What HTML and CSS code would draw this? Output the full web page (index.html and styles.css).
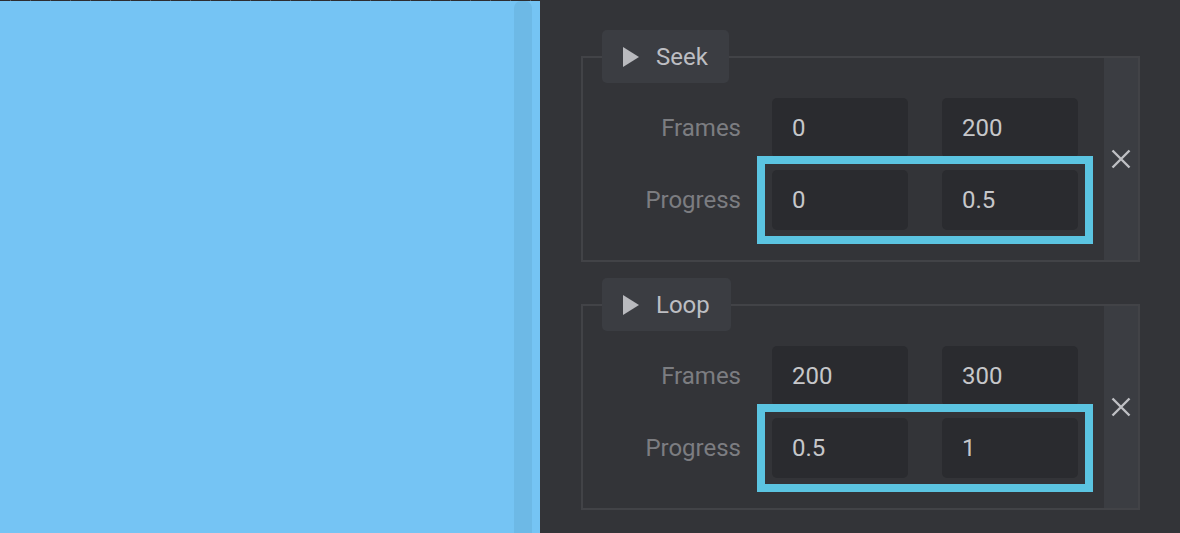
FILE: index.html
```html
<!DOCTYPE html>
<html lang="en">
<head>
<meta charset="utf-8">
<title>Animation segments</title>
<link rel="stylesheet" href="styles.css">
</head>
<body>
<div class="app">
  <div class="preview">
    <div class="ruler"></div>
    <div class="preview-area">
      <div class="track"></div>
    </div>
  </div>
  <div class="panel">
    <section class="group">
      <button class="legend">
        <svg class="play" width="16" height="20" viewBox="0 0 16 20"><polygon points="0,0 16,10 0,20" fill="currentColor"/></svg>
        <span>Seek</span>
      </button>
      <div class="box">
        <div class="fields">
          <div class="row">
            <span class="label">Frames</span>
            <div class="pair">
              <div class="input">0</div>
              <div class="input">200</div>
            </div>
          </div>
          <div class="row">
            <span class="label">Progress</span>
            <div class="pair">
              <div class="input">0</div>
              <div class="input">0.5</div>
              <div class="highlight"></div>
            </div>
          </div>
        </div>
        <div class="remove">
          <svg width="20" height="20" viewBox="0 0 20 20"><path d="M1.5 1.5 L18.5 18.5 M18.5 1.5 L1.5 18.5" stroke="currentColor" stroke-width="2.4" fill="none"/></svg>
        </div>
      </div>
    </section>
    <section class="group">
      <button class="legend">
        <svg class="play" width="16" height="20" viewBox="0 0 16 20"><polygon points="0,0 16,10 0,20" fill="currentColor"/></svg>
        <span>Loop</span>
      </button>
      <div class="box">
        <div class="fields">
          <div class="row">
            <span class="label">Frames</span>
            <div class="pair">
              <div class="input">200</div>
              <div class="input">300</div>
            </div>
          </div>
          <div class="row">
            <span class="label">Progress</span>
            <div class="pair">
              <div class="input">0.5</div>
              <div class="input">1</div>
              <div class="highlight"></div>
            </div>
          </div>
        </div>
        <div class="remove">
          <svg width="20" height="20" viewBox="0 0 20 20"><path d="M1.5 1.5 L18.5 18.5 M18.5 1.5 L1.5 18.5" stroke="currentColor" stroke-width="2.4" fill="none"/></svg>
        </div>
      </div>
    </section>
  </div>
</div>
</body>
</html>
```

FILE: styles.css
```css
html, body {
  margin: 0;
  padding: 0;
  width: 1180px;
  height: 533px;
  overflow: hidden;
  background: #333438;
  font-family: Roboto, "Liberation Sans", sans-serif;
}

.app {
  display: flex;
  width: 1180px;
  height: 533px;
}

.preview {
  width: 540px;
  flex: none;
  display: flex;
  flex-direction: column;
  background: #75c4f4;
}

.ruler {
  height: 1px;
  flex: none;
  background: repeating-linear-gradient(to right, #2c2d31 0 10px, #5a5c60 10px 11px, #2c2d31 11px 20px);
}

.preview-area {
  flex: 1;
  display: flex;
  justify-content: flex-end;
  padding-right: 8px;
}

.track {
  width: 18px;
  background: #6db9e6;
  border-radius: 7px 7px 0 0;
}

.panel {
  flex: 1;
  background: #333438;
  padding: 30px 40px 0 41px;
  display: flex;
  flex-direction: column;
  gap: 16px;
}

.group {
  display: flex;
  flex-direction: column;
}

.legend {
  align-self: flex-start;
  margin-left: 21px;
  height: 53px;
  padding: 0 21px;
  display: flex;
  align-items: center;
  gap: 17px;
  background: #3b3d42;
  border: none;
  border-radius: 5px;
  color: #bdbec2;
  font-family: Roboto, "Liberation Sans", sans-serif;
  font-size: 24px;
  position: relative;
  z-index: 1;
}

.play {
  color: #b9babe;
  display: block;
}

.box {
  margin-top: -27px;
  height: 206px;
  box-sizing: border-box;
  border: 2px solid #424347;
  display: flex;
}

.fields {
  flex: 1;
  padding: 40px 26px 0 0;
  display: flex;
  flex-direction: column;
  gap: 12px;
}

.row {
  display: flex;
  align-items: center;
  gap: 31px;
}

.label {
  width: 158px;
  text-align: right;
  color: #7c7d81;
  font-size: 24px;
}

.pair {
  position: relative;
  display: flex;
  gap: 34px;
}

.input {
  width: 136px;
  height: 60px;
  box-sizing: border-box;
  padding-left: 20px;
  display: flex;
  align-items: center;
  background: #2a2b2f;
  border-radius: 5px;
  color: #c6c7ca;
  font-size: 24px;
}

.highlight {
  position: absolute;
  top: -14px;
  bottom: -14px;
  left: -15px;
  right: -15px;
  border: 8px solid #5bc4e1;
  pointer-events: none;
}

.remove {
  width: 34px;
  flex: none;
  background: #3b3d42;
  color: #bfc0c4;
  display: flex;
  align-items: center;
  justify-content: center;
}

.remove svg {
  display: block;
}
```
